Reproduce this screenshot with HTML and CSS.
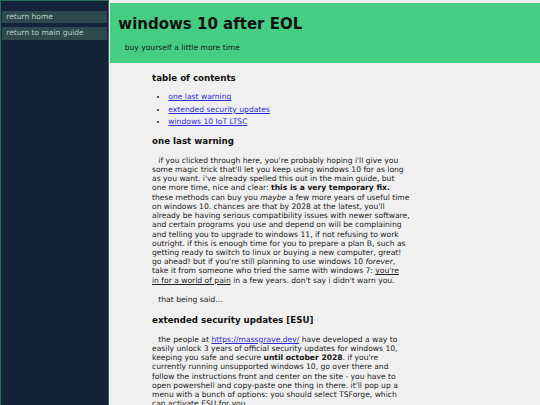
FILE: index.html
```html
<!DOCTYPE html>
<html lang="en">
<head>
<meta charset="utf-8">
<title>windows 10 after EOL</title>
<link rel="stylesheet" href="styles.css">
</head>
<body>
<div class="page">
  <nav class="sidebar">
    <a class="side-link" href="#">return home</a>
    <a class="side-link" href="#">return to main guide</a>
  </nav>
  <main class="main">
    <header class="header">
      <h1 class="title">windows 10 after EOL</h1>
      <p class="subtitle">buy yourself a little more time</p>
    </header>
    <div class="content">
      <div class="toc">
        <h2 class="heading toc-title">table of contents</h2>
        <ul class="toc-list">
          <li><a href="#warning">one last warning</a></li>
          <li><a href="#esu">extended security updates</a></li>
          <li><a href="#iot">windows 10 IoT LTSC</a></li>
        </ul>
      </div>
      <h2 class="heading" id="warning">one last warning</h2>
      <p class="para">if you clicked through here, you're probably hoping i'll give you some magic trick that'll let you keep using windows 10 for as long as you want. i've already spelled this out in the main guide, but one more time, nice and clear: <b>this is a very temporary fix.</b> these methods can buy you <i>maybe</i> a few more years of useful time on windows 10. chances are that by 2028 at the latest, you'll already be having serious compatibility issues with newer software, and certain programs you use and depend on will be complaining and telling you to upgrade to windows 11, if not refusing to work outright. if this is enough time for you to prepare a plan B, such as getting ready to switch to linux or buying a new computer, great! go ahead! but if you're still planning to use windows 10 <i>forever</i>, take it from someone who tried the same with windows 7: <u>you're <span class="nobr">in for</span> a world of pain</u> in a few years. don't say i didn't warn you.</p>
      <p class="para">that being said...</p>
      <h2 class="heading" id="esu">extended security updates [ESU]</h2>
      <p class="para">the people at <a href="#">https://massgrave.dev/</a> have developed a way to easily unlock 3 years of official security updates for windows 10, keeping you safe and secure <b>until october 2028</b>. if you're currently running unsupported windows 10, go over there and follow the instructions front and center on the site - you have to open powershell and copy-paste one thing in there. it'll pop up a menu with a bunch of options: you should select TSForge, which can activate ESU for you.</p>
      <h2 class="heading" id="iot">windows 10 IoT LTSC</h2>
      <p class="para">more on this below.</p>
    </div>
  </main>
</div>
</body>
</html>
```

FILE: styles.css
```css
html, body {
  margin: 0;
  padding: 0;
  background: #f0f0f0;
}

body {
  font-family: "DejaVu Sans", Verdana, sans-serif;
  font-size: 7.6px;
  line-height: 9.23px;
  color: #222222;
}

.page {
  display: flex;
  align-items: stretch;
  min-height: 100vh;
}

.sidebar {
  box-sizing: border-box;
  width: 109px;
  flex: 0 0 109px;
  background: #14233a;
  border: 1px solid #2c6c56;
  padding: 10px 1px 0 1.3px;
  display: flex;
  flex-direction: column;
  gap: 4px;
}

.side-link {
  display: block;
  background: #2f4a4e;
  color: #b9cccc;
  text-decoration: none;
  font-size: 7.5px;
  line-height: 12.3px;
  height: 12.3px;
  padding-left: 4px;
  white-space: nowrap;
}

.main {
  flex: 1;
  margin-left: 1px;
  min-width: 0;
}

.header {
  margin-top: 3.3px;
  background: #45cd84;
  padding: 11.8px 8.3px 10.7px;
}

.title {
  margin: 0;
  font-size: 15px;
  line-height: 18px;
  font-weight: bold;
  color: #111111;
}

.subtitle {
  margin: 9.65px 0 0 6.4px;
  color: #1a1a1a;
}

.content {
  margin-left: 42px;
  width: 258px;
}

.heading {
  font-size: 8.7px;
  line-height: 10.5px;
  font-weight: bold;
  color: #111111;
  margin: 11px 0 9px;
}

.toc-title {
  margin: 10.5px 0 7.6px;
}

.toc-list {
  margin: 0;
  padding-left: 16.3px;
}

.toc-list li {
  line-height: 12.3px;
}

.toc + .heading {
  margin-top: 8px;
}

.para {
  margin: 9px 0 10px;
  text-indent: 6.3px;
}

.nobr {
  white-space: nowrap;
}

a {
  color: #2b2bd4;
}

b {
  color: #111111;
}
```
